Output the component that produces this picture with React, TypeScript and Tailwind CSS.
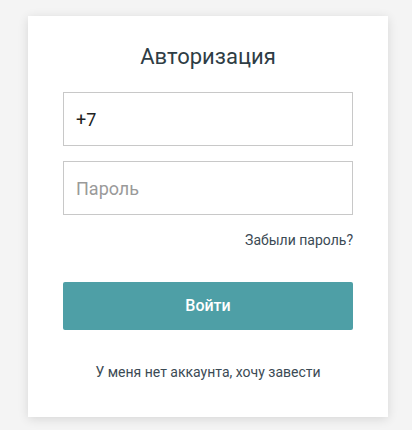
export default function App() {
  return (
    <div className="min-h-[430px] bg-[#f4f4f4] pt-4 pl-7" style={{ fontFamily: "Roboto, 'Liberation Sans', sans-serif" }}>
      <div className="w-[360px] bg-white px-[35px] pt-[28px] pb-[35px] shadow-[0_2px_10px_rgba(0,0,0,0.12)]">
        <h1 className="text-center text-[22px] leading-[26px] font-normal text-[#2e3d45]">Авторизация</h1>
        <div className="mt-[22px] flex flex-col gap-[15px]">
          <input
            defaultValue="+7"
            className="h-[54px] w-full border border-[#c8c8c8] px-3 text-[18px] text-[#222] outline-none"
          />
          <input
            type="password"
            placeholder="Пароль"
            className="h-[54px] w-full border border-[#c8c8c8] px-3 text-[18px] text-[#222] placeholder:text-[#9a9a9a] outline-none"
          />
        </div>
        <div className="mt-[15px] text-right text-[14px] leading-[20px] text-[#3b4a54]">Забыли пароль?</div>
        <button className="mt-[32px] h-[48px] w-full rounded-[2px] bg-[#4e9fa6] text-[16px] font-medium text-white">
          Войти
        </button>
        <div className="mt-[32px] text-center text-[14px] leading-[20px] text-[#3b4a54]">У меня нет аккаунта, хочу завести</div>
      </div>
    </div>
  );
}
